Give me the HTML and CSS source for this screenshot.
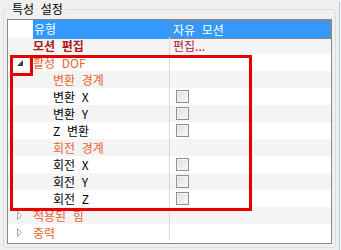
FILE: index.html
```html
<!DOCTYPE html>
<html>
<head>
    <meta charset="UTF-8">
    <title>특성 설정</title>
    <link rel="stylesheet" href="styles.css">
</head>
<body>
<div class="window">
    <fieldset class="group">
        <legend>특성 설정</legend>
        <div class="list">
            <div class="row head">
                <span class="exp"></span>
                <span class="c1">유형</span>
                <span class="c2 focus">자유 모션</span>
            </div>
            <div class="row alt">
                <span class="exp"></span>
                <span class="c1 motion">모션 편집</span>
                <span class="c2 edit">편집...</span>
            </div>
            <div class="row">
                <span class="exp"><svg width="6" height="6" viewBox="0 0 6 6"><polygon points="6,0 6,6 0,6" fill="#454545"/></svg></span>
                <span class="c1 cat">활성 DOF</span>
                <span class="c2"></span>
            </div>
            <div class="row alt">
                <span class="exp"></span>
                <span class="c1 cat sub">변환 경계</span>
                <span class="c2"></span>
            </div>
            <div class="row">
                <span class="exp"></span>
                <span class="c1 sub">변환 X</span>
                <span class="c2"><span class="check"></span></span>
            </div>
            <div class="row alt">
                <span class="exp"></span>
                <span class="c1 sub">변환 Y</span>
                <span class="c2"><span class="check"></span></span>
            </div>
            <div class="row">
                <span class="exp"></span>
                <span class="c1 sub">Z 변환</span>
                <span class="c2"><span class="check"></span></span>
            </div>
            <div class="row alt">
                <span class="exp"></span>
                <span class="c1 cat sub">회전 경계</span>
                <span class="c2"></span>
            </div>
            <div class="row">
                <span class="exp"></span>
                <span class="c1 sub">회전 X</span>
                <span class="c2"><span class="check"></span></span>
            </div>
            <div class="row alt">
                <span class="exp"></span>
                <span class="c1 sub">회전 Y</span>
                <span class="c2"><span class="check"></span></span>
            </div>
            <div class="row">
                <span class="exp"></span>
                <span class="c1 sub">회전 Z</span>
                <span class="c2"><span class="check"></span></span>
            </div>
            <div class="row alt">
                <span class="exp"><svg width="6" height="9" viewBox="0 0 6 9"><polygon points="0.5,0.5 4.5,4.5 0.5,8.5" fill="#fff" stroke="#a6a6a6"/></svg></span>
                <span class="c1 cat">적용된 힘</span>
                <span class="c2"></span>
            </div>
            <div class="row">
                <span class="exp"><svg width="6" height="9" viewBox="0 0 6 9"><polygon points="0.5,0.5 4.5,4.5 0.5,8.5" fill="#fff" stroke="#a6a6a6"/></svg></span>
                <span class="c1 cat">중력</span>
                <span class="c2"></span>
            </div>
        </div>
    </fieldset>
    <div class="mark mark-big"></div>
    <div class="mark mark-small"></div>
</div>
</body>
</html>
```

FILE: styles.css
```css
html, body {
    margin: 0;
    padding: 0;
    background-color: #f0f0f0;
}
body {
    font-family: "Noto Sans CJK KR", "Liberation Sans", sans-serif;
    font-size: 12px;
    color: #000;
}
.window {
    position: relative;
    width: 339px;
    height: 250px;
    border-right: 1px solid #b4cde6;
    background-color: #f0f0f0;
}
.group {
    box-sizing: border-box;
    width: 333px;
    margin: 2px 0 0 3px;
    padding: 0 0 3px 0;
    border: 1px solid #d5dfe5;
    border-radius: 3px;
    min-width: 0;
}
.group legend {
    margin-left: 6px;
    padding: 0 2px;
    line-height: 14px;
    word-spacing: 4px;
}
.list {
    box-sizing: border-box;
    height: 225px;
    margin: 3px 3px 0 3px;
    border: 1px solid #828790;
    background-color: #fff;
}
.row {
    display: grid;
    grid-template-columns: 25px 137px 1fr;
    height: 17px;
    line-height: 17px;
    word-spacing: 4px;
}
.row.alt {
    background-color: #f4f4f4;
}
.exp {
    display: flex;
    align-items: center;
    padding-left: 9px;
}
.c1 {
    border-right: 1px solid #d8d8d8;
    white-space: nowrap;
}
.c2 {
    display: flex;
    align-items: center;
    padding-left: 3px;
    white-space: nowrap;
}
.head .c1, .head .c2 {
    background-color: #3399ff;
    color: #fff;
}
.head .c1 {
    padding-left: 1px;
    border-right: none;
}
.head .focus {
    box-sizing: border-box;
    border: 1px dotted #d0782c;
    padding-left: 2px;
}
.motion {
    font-weight: bold;
    color: #b01818;
}
.edit {
    color: #b0183a;
}
.cat {
    color: #e8632c;
}
.sub {
    padding-left: 20px;
}
.check {
    box-sizing: border-box;
    width: 13px;
    height: 13px;
    margin-left: 3px;
    border: 1px solid #8e8f8f;
    background: linear-gradient(135deg, #dcdcdc, #fafafa);
    box-shadow: inset 0 0 0 1px #f4f4f4;
}
.mark {
    position: absolute;
    box-sizing: border-box;
    border: 3px solid #e60000;
}
.mark-big {
    left: 10px;
    top: 53px;
    width: 242px;
    height: 156px;
}
.mark-small {
    left: 10px;
    top: 53px;
    width: 23px;
    height: 21px;
}
```
